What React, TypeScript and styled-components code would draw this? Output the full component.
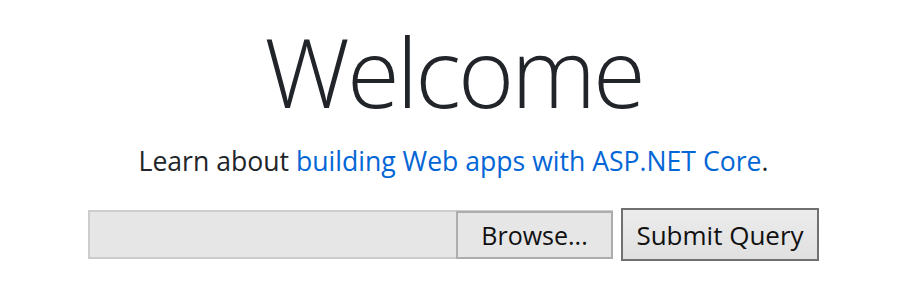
import React from "react";
import styled, { createGlobalStyle } from "styled-components";

const Global = createGlobalStyle`
  html, body { margin: 0; padding: 0; background: #ffffff; }
  body { font-family: "Open Sans", "Noto Sans", sans-serif; color: #212529; }
`;

const Page = styled.main`
  display: flex;
  flex-direction: column;
  align-items: center;
  padding-top: 13px;
`;

const Title = styled.h1`
  margin: 0;
  font-family: "Open Sans", "Noto Sans", sans-serif;
  font-weight: 300;
  font-size: 96px;
  line-height: 116px;
  color: #212529;
  letter-spacing: -3px;
`;

const Lead = styled.p`
  margin: 14px 0 0;
  font-size: 26.6px;
  line-height: 36px;
  color: #212529;
`;

const Link = styled.a`
  color: #0366d6;
  text-decoration: none;
`;

const Form = styled.form`
  display: flex;
  align-items: center;
  gap: 8px;
  margin-top: 29px;
`;

const FileField = styled.div`
  display: flex;
  height: 49px;
  box-sizing: border-box;
  border: 2px solid #cccccc;
  background: #e6e6e6;
`;

const FileName = styled.div`
  width: 366px;
`;

const BrowseButton = styled.span`
  display: flex;
  align-items: center;
  justify-content: center;
  width: 157px;
  margin: -1px -2px -2px 0;
  box-sizing: border-box;
  border: 2px solid #adadad;
  background: #e6e6e6;
  font-size: 25px;
  color: #111;
`;

const SubmitButton = styled.button`
  height: 53px;
  width: 198px;
  box-sizing: border-box;
  border: 2px solid #707070;
  background: linear-gradient(#ececec, #e0e0e0);
  font-family: "Open Sans", "Noto Sans", sans-serif;
  font-size: 26px;
  color: #111;
  padding: 0;
`;

export default function App() {
  return (
    <>
      <Global />
      <Page>
        <Title>Welcome</Title>
        <Lead>
          Learn about <Link href="#">building Web apps with ASP.NET Core</Link>.
        </Lead>
        <Form onSubmit={(e) => e.preventDefault()}>
          <FileField>
            <FileName />
            <BrowseButton>Browse...</BrowseButton>
          </FileField>
          <SubmitButton type="submit">Submit Query</SubmitButton>
        </Form>
      </Page>
    </>
  );
}
